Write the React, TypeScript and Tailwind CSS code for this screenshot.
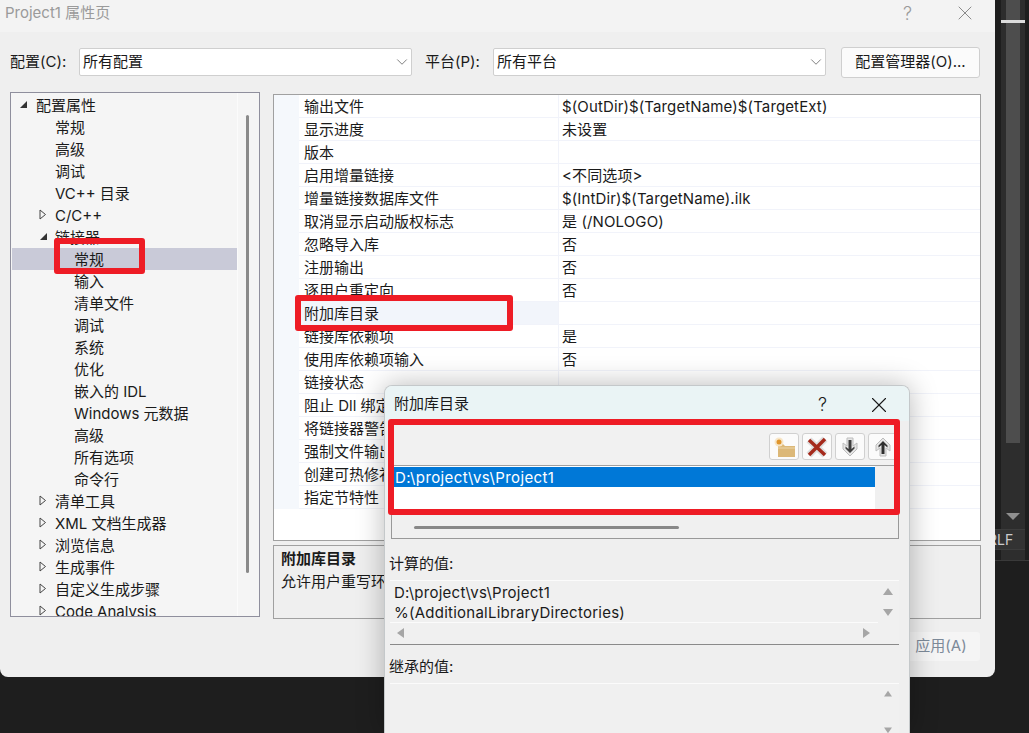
import { ChevronDown, X } from 'lucide-react';

const treeRows = [
  { label: '配置属性', level: 0, arrow: 'open' },
  { label: '常规', level: 1 },
  { label: '高级', level: 1 },
  { label: '调试', level: 1 },
  { label: 'VC++ 目录', level: 1 },
  { label: 'C/C++', level: 1, arrow: 'closed' },
  { label: '链接器', level: 1, arrow: 'open' },
  { label: '常规', level: 2, selected: true },
  { label: '输入', level: 2 },
  { label: '清单文件', level: 2 },
  { label: '调试', level: 2 },
  { label: '系统', level: 2 },
  { label: '优化', level: 2 },
  { label: '嵌入的 IDL', level: 2 },
  { label: 'Windows 元数据', level: 2 },
  { label: '高级', level: 2 },
  { label: '所有选项', level: 2 },
  { label: '命令行', level: 2 },
  { label: '清单工具', level: 1, arrow: 'closed' },
  { label: 'XML 文档生成器', level: 1, arrow: 'closed' },
  { label: '浏览信息', level: 1, arrow: 'closed' },
  { label: '生成事件', level: 1, arrow: 'closed' },
  { label: '自定义生成步骤', level: 1, arrow: 'closed' },
  { label: 'Code Analysis', level: 1, arrow: 'closed' },
];

const gridRows = [
  ['输出文件', '$(OutDir)$(TargetName)$(TargetExt)'],
  ['显示进度', '未设置'],
  ['版本', ''],
  ['启用增量链接', '<不同选项>'],
  ['增量链接数据库文件', '$(IntDir)$(TargetName).ilk'],
  ['取消显示启动版权标志', '是 (/NOLOGO)'],
  ['忽略导入库', '否'],
  ['注册输出', '否'],
  ['逐用户重定向', '否'],
  ['附加库目录', ''],
  ['链接库依赖项', '是'],
  ['使用库依赖项输入', '否'],
  ['链接状态', ''],
  ['阻止 Dll 绑定', ''],
  ['将链接器警告视为错误', ''],
  ['强制文件输出', ''],
  ['创建可热修补映像', ''],
  ['指定节特性', ''],
];

function TreeArrow({ type }: { type: string }) {
  if (type === 'open') {
    return (
      <svg width="9" height="9" viewBox="0 0 9 9" className="shrink-0">
        <path d="M8 1V8H1Z" fill="#333" />
      </svg>
    );
  }
  return (
    <svg width="8" height="11" viewBox="0 0 8 11" className="shrink-0">
      <path d="M1 1L6.5 5.5L1 10Z" fill="#f5f5f5" stroke="#444" strokeWidth="1" />
    </svg>
  );
}

function Combo({ text }: { text: string }) {
  return (
    <div className="flex h-[28px] w-[333px] items-center justify-between rounded-[2px] border border-[#cfcfcf] bg-white pl-[3px]">
      <span>{text}</span>
      <ChevronDown size={18} strokeWidth={1} className="text-[#555]" />
    </div>
  );
}

function ToolButton({ children }: { children: React.ReactNode }) {
  return (
    <div className="flex h-[27px] w-[30px] items-center justify-center rounded-[3px] border border-[#d0d0d0] bg-[#fbfbfb]">
      {children}
    </div>
  );
}

function Triangle({ dir }: { dir: 'up' | 'down' | 'left' | 'right' }) {
  const d = {
    up: 'M5 1L10 8H0Z',
    down: 'M5 9L0 2H10Z',
    left: 'M1 5L8 0V10Z',
    right: 'M9 5L2 0V10Z',
  }[dir];
  return (
    <svg width="10" height="10" viewBox="0 0 10 10">
      <path d={d} fill="#a6a6a6" />
    </svg>
  );
}

export default function App() {
  return (
    <div className="relative flex h-[733px] w-[1029px] overflow-hidden bg-[#1e1e1e] font-['Inter','Noto_Sans_CJK_SC',sans-serif] text-[15px] text-[#1a1a1a]">
      {/* main property page */}
      <div className="flex h-[677px] w-[995px] shrink-0 flex-col rounded-b-[8px] bg-[#efefef]">
        <div className="flex h-[32px] shrink-0 items-center justify-between bg-[#f3f3f3] pb-[6px] pl-[5px] pr-[18px] text-[#9a9a9a]">
          <span>Project1 属性页</span>
          <div className="flex items-center gap-[41px]">
            <span className="text-[18px] font-light">?</span>
            <X size={24} strokeWidth={1} className="text-[#8a8a8a]" />
          </div>
        </div>

        <div className="mt-[15px] flex h-[30px] items-center pl-[10px]">
          <span className="w-[69px]">配置(C):</span>
          <Combo text="所有配置" />
          <span className="ml-[13px] w-[68px]">平台(P):</span>
          <Combo text="所有平台" />
          <div className="ml-[15px] flex h-[31px] w-[139px] items-center justify-center rounded-[3px] border border-[#cfcfcf] bg-[#fbfbfb]">
            配置管理器(O)...
          </div>
        </div>

        <div className="mt-[15px] flex pl-[10px]">
          <div className="flex h-[525px] w-[250px] overflow-hidden border border-[#8f8f9d] bg-[#f5f5f5]">
            <div className="h-full w-[227px] shrink-0 overflow-hidden border-r border-[#fbfbfb] pl-[1px] pt-[1px]">
              {treeRows.map((row, i) => (
                <div
                  key={i}
                  className={`relative flex h-[22px] items-center whitespace-nowrap pt-[2px] ${row.selected ? 'bg-[#c9cad8]' : ''} ${row.level === 0 ? 'pl-[24px]' : row.level === 1 ? 'pl-[43px]' : 'pl-[62px]'}`}
                >
                  {row.arrow && (
                    <span className={`absolute top-[5px] flex h-[11px] items-center ${row.level === 0 ? 'left-[7px]' : 'left-[27px]'}`}>
                      <TreeArrow type={row.arrow} />
                    </span>
                  )}
                  {row.label}
                </div>
              ))}
            </div>
            <div className="flex flex-1 justify-center pr-[2px] pt-[22px]">
              <div className="h-[458px] w-[3px] rounded-full bg-[#8a8a8a]" />
            </div>
          </div>

          <div className="ml-[13px] mt-[2px] flex flex-col">
            <div className="h-[447px] w-[708px] border border-[#a0a0a0] bg-white">
              {gridRows.map(([name, value], i) => (
                <div key={i} className="flex h-[23px]">
                  <div className="w-[25px] shrink-0 bg-[#f5f8fc]" />
                  <div className={`flex w-[259px] items-center border-b border-[#f1f3fa] pl-[5px] pt-[3px] ${name === '附加库目录' ? 'bg-[#f2f5fb]' : ''}`}>
                    {name}
                  </div>
                  <div className="flex flex-1 items-center border-b border-l border-[#f1f3fa] pl-[3px] pt-[3px] tracking-[0.12px]">
                    {value}
                  </div>
                </div>
              ))}
            </div>
            <div className="mt-[4px] h-[74px] w-[708px] border border-[#a0a0a0] pl-[7px] pt-[1px]">
              <div className="h-[23px] font-bold leading-[23px]">附加库目录</div>
              <div className="h-[23px] leading-[23px]">允许用户重写环境库路径。</div>
            </div>
            <div className="mt-[13px] flex justify-end">
              <div className="mr-[1px] flex h-[29px] w-[78px] items-center justify-center rounded-[3px] bg-[#f5f5f5] text-[#7d8a99]">
                应用(A)
              </div>
            </div>
          </div>
        </div>
      </div>

      {/* editor strip behind the window */}
      <div className="flex h-[561px] flex-1 flex-col border-b border-[#3a3a3a] pl-[6px]">
        <div className="flex w-[24px] flex-1 flex-col items-center bg-[#2d2d2d]">
          <div className="h-[443px] w-[14px] bg-[#4d4d4d]" />
          <div className="mt-[70px] h-0 w-0 border-x-[7px] border-t-[7px] border-x-transparent border-t-[#8f8f8f]" />
        </div>
        <div className="-ml-[6px] flex h-[21px] w-[30px] items-center overflow-hidden border-y border-[#3c3c3c] bg-[#333333] text-[14px] text-[#cccccc]">
          <span className="-ml-[7px]">RLF</span>
        </div>
        <div className="h-[10px] w-[24px] bg-[#2d2d2d]" />
      </div>
      <div className="absolute left-[1001px] top-[20px] h-[3px] w-[24px] bg-[#dddddd]" />

      {/* additional library directories dialog */}
      <div className="absolute left-[384px] top-[385px] flex h-[348px] w-[526px] flex-col overflow-hidden rounded-t-[8px] border border-b-0 border-[#c4c8ca] bg-[#efefef] shadow-[0_0_28px_rgba(0,0,0,0.28)]">
        <div className="flex h-[35px] shrink-0 items-center justify-between bg-[#eaf4f5] pl-[9px] pr-[17px] pt-[2px]">
          <span>附加库目录</span>
          <div className="flex items-center gap-[39px]">
            <span className="text-[18px] font-light">?</span>
            <X size={26} strokeWidth={1} />
          </div>
        </div>

        <div className="ml-[6px] w-[508px] shrink-0">
          <div className="flex h-[45px] items-end justify-end gap-[3px] border-b border-[#a0a0a0] bg-[#f1f1f1] pb-[5px] pr-[1px]">
            <ToolButton>
              <svg width="24" height="22" viewBox="0 0 24 22">
                <path d="M6 8H11L13 10H23V21H6Z" fill="#dcb878" />
                <path d="M6 12H23" stroke="#ecd6a8" strokeWidth="1" />
                <circle cx="7" cy="6" r="4.5" fill="#f7e6c8" />
                <circle cx="7" cy="6" r="2.5" fill="#e0962e" />
              </svg>
            </ToolButton>
            <ToolButton>
              <svg width="24" height="22" viewBox="0 0 24 22">
                <path d="M4 4L20 19M20 3L4 19" stroke="#dedede" strokeWidth="7" />
                <path d="M4 4L20 19M20 3L4 19" stroke="#a52a1c" strokeWidth="3.5" />
              </svg>
            </ToolButton>
            <ToolButton>
              <svg width="20" height="22" viewBox="0 0 20 22">
                <path d="M7 2H13V10L17 7V13L10 20L3 13V7L7 10Z" fill="#e6e6e6" stroke="#bdbdbd" strokeWidth="1" />
                <path d="M8.5 4H11.5V13L14.5 10.5V12.5L10 17L5.5 12.5V10.5L8.5 13Z" fill="#3f3f3f" />
              </svg>
            </ToolButton>
            <ToolButton>
              <svg width="20" height="22" viewBox="0 0 20 22">
                <path d="M7 20H13V12L17 15V9L10 2L3 9V15L7 12Z" fill="#e6e6e6" stroke="#bdbdbd" strokeWidth="1" />
                <path d="M8.5 18H11.5V9L14.5 11.5V9.5L10 5L5.5 9.5V11.5L8.5 9Z" fill="#2f2f2f" />
              </svg>
            </ToolButton>
          </div>
          <div className="flex h-[46px]">
            <div className="w-[484px] bg-white pt-[1px]">
              <div className="flex h-[20px] items-center bg-[#0078d7] pl-[4px] pt-[3px] tracking-[0.4px] text-white">D:\project\vs\Project1</div>
            </div>
            <div className="flex-1 bg-[#f0f0f0]" />
          </div>
          <div className="flex h-[27px] items-center border border-t-0 border-[#999] bg-[#f0f0f0] pl-[22px]">
            <div className="mt-[4px] h-[3px] w-[265px] rounded-full bg-[#888]" />
          </div>
        </div>

        <div className="ml-[4px] mt-[15px] h-[20px] shrink-0 leading-[20px]">计算的值:</div>
        <div className="ml-[5px] mt-[6px] h-[65px] w-[509px] shrink-0 border-b border-[#8a8a8a] bg-[#f0f0f0]">
          <div className="flex h-[43px] border-t border-[#fbfbfb]">
            <div className="w-[488px] border-b border-[#fbfbfb] pl-[4px] pt-[2px] tracking-[0.25px]">
              <div className="h-[20px] leading-[20px]">D:\project\vs\Project1</div>
              <div className="h-[20px] leading-[20px]">%(AdditionalLibraryDirectories)</div>
            </div>
            <div className="flex flex-1 flex-col items-center gap-[10px] pr-[2px] pt-[6px]">
              <Triangle dir="up" />
              <Triangle dir="down" />
            </div>
          </div>
          <div className="flex items-center justify-between pl-[6px] pr-[28px] pt-[5px]">
            <Triangle dir="left" />
            <Triangle dir="right" />
          </div>
        </div>
        <div className="ml-[4px] mt-[12px] h-[20px] shrink-0 leading-[20px]">继承的值:</div>
        <div className="ml-[5px] mt-[6px] flex h-[51px] w-[509px] shrink-0 border-t border-[#fbfbfb] bg-[#f0f0f0]">
          <div className="w-[488px]" />
          <div className="flex flex-1 flex-col items-center gap-[28px] pr-[2px] pt-[6px]">
            <Triangle dir="up" />
            <Triangle dir="down" />
          </div>
        </div>
      </div>

      {/* red annotation boxes drawn on the screenshot */}
      <div className="absolute left-[54px] top-[238px] h-[36px] w-[91px] rounded-[3px] border-[6px] border-[#ee1c25]" />
      <div className="absolute left-[295px] top-[295px] h-[36px] w-[218px] rounded-[3px] border-[6px] border-[#ee1c25]" />
      <div className="absolute left-[388px] top-[419px] h-[96px] w-[512px] rounded-[3px] border-[6px] border-[#ee1c25]" />
    </div>
  );
}
